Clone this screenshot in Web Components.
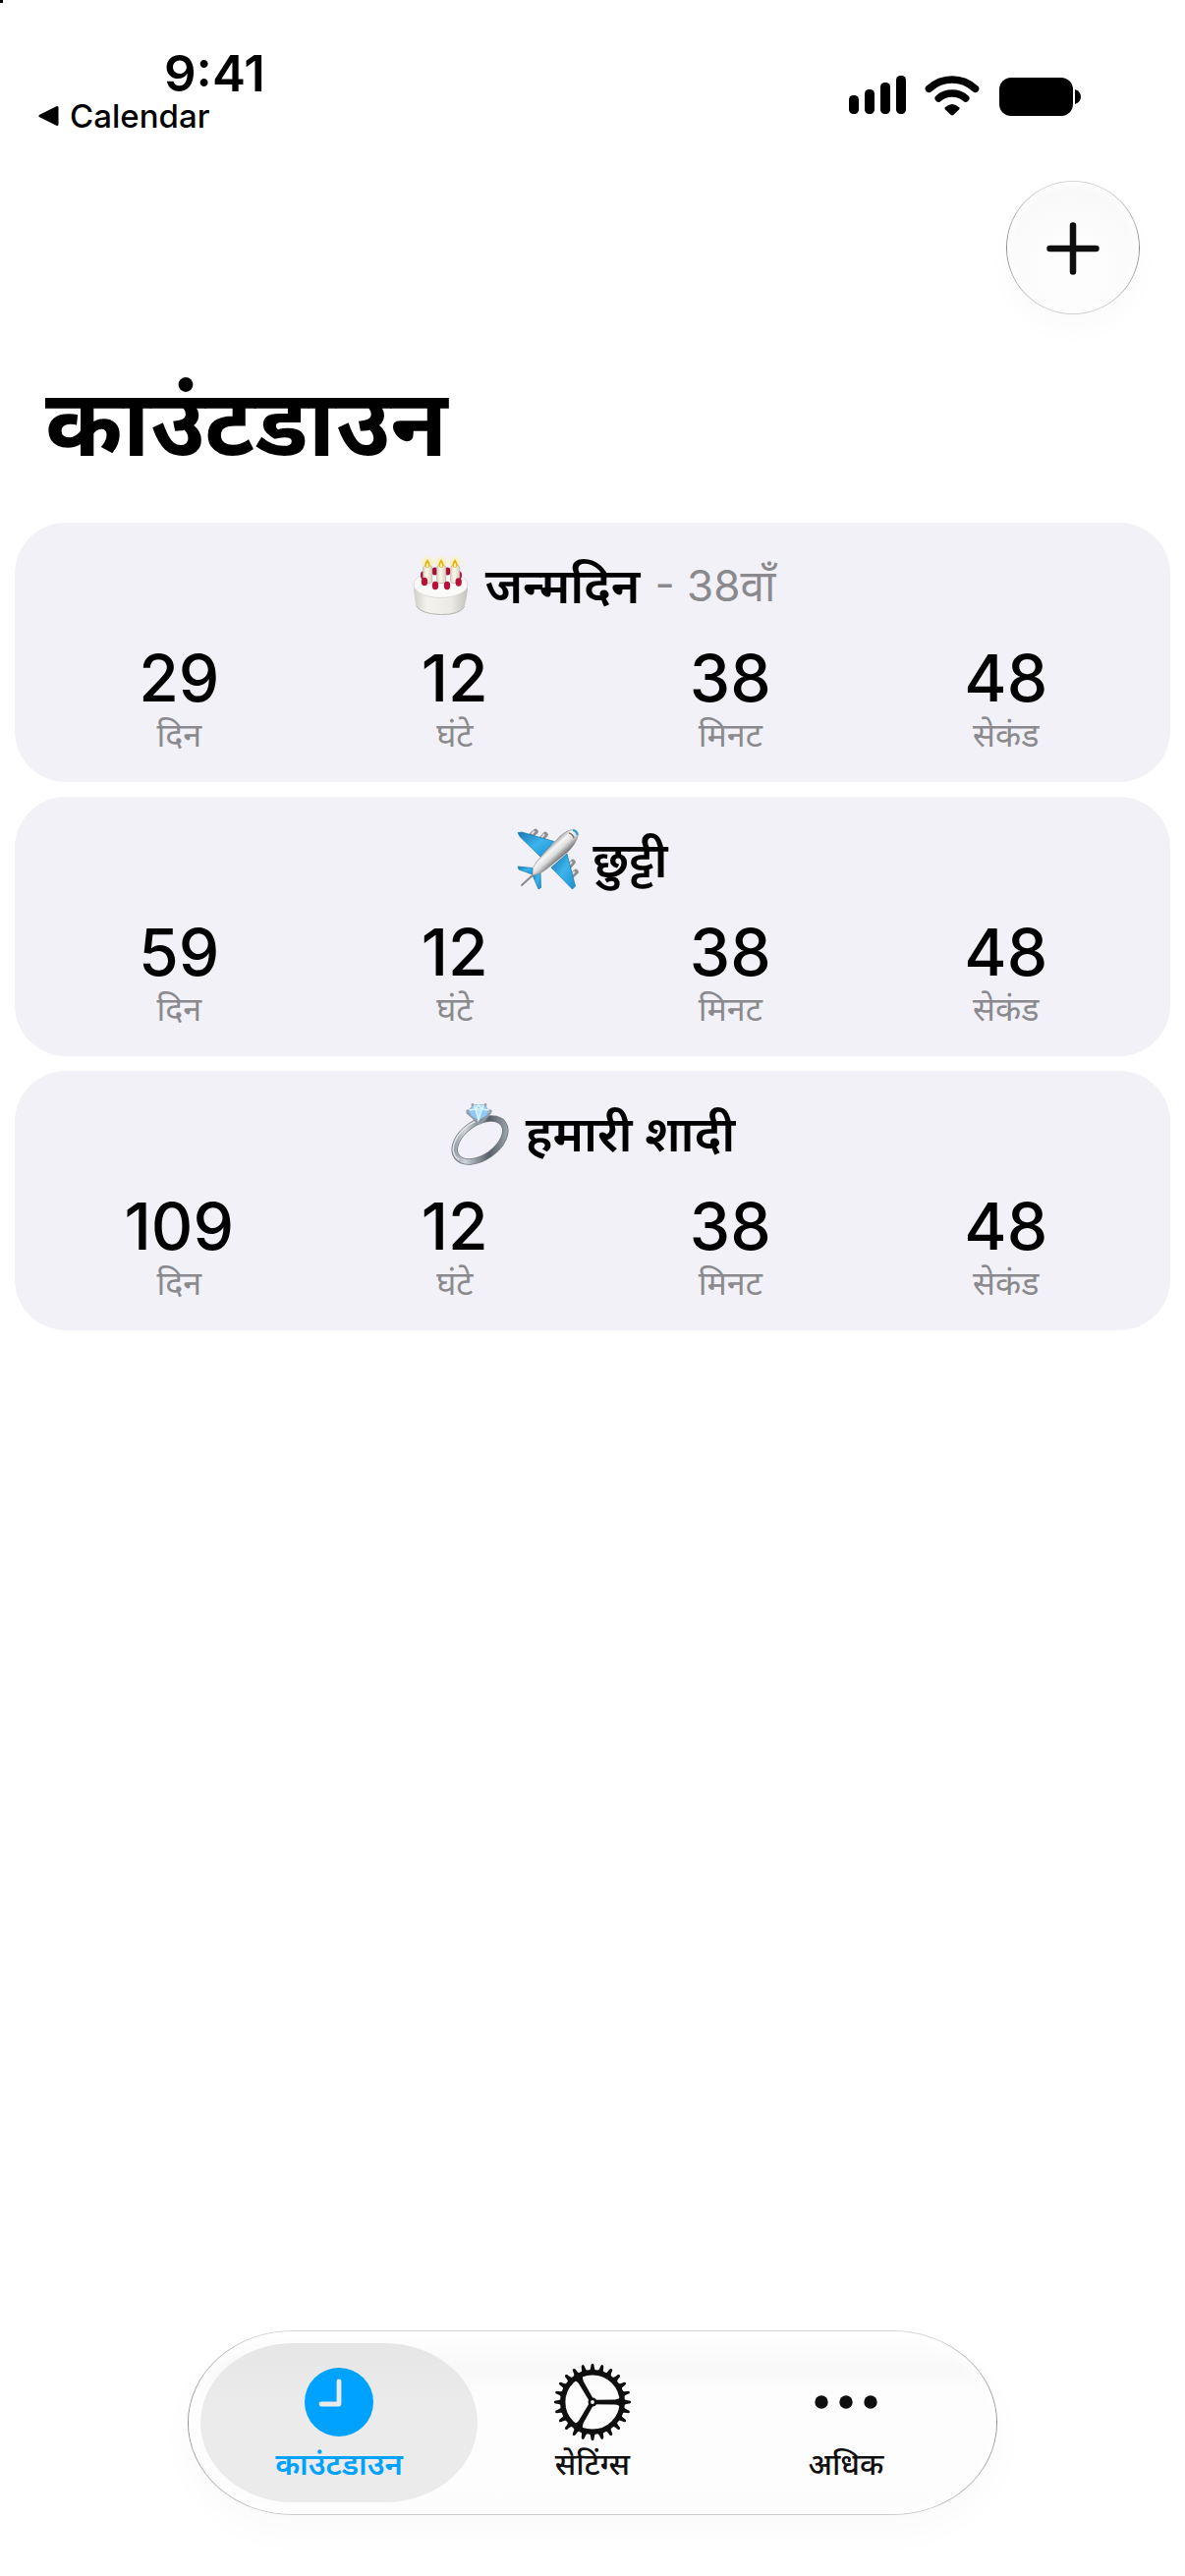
<!DOCTYPE html>
<html lang="hi">
<head>
<meta charset="utf-8">
<meta name="viewport" content="width=device-width, initial-scale=1">
<title>काउंटडाउन</title>
<style>
  html, body { margin: 0; background: #fff; }
  body {
    font-family: Inter, "Noto Sans Devanagari", "Noto Sans", sans-serif;
    color: #000;
  }
</style>
</head>
<body>
<countdown-app>
  <status-bar slot="status" time="9:41" back="Calendar"></status-bar>
  <glass-button slot="action" label="जोड़ें"></glass-button>
  <span slot="title">काउंटडाउन</span>

  <countdown-card days="29" hours="12" minutes="38" seconds="48">
    <emoji-icon slot="icon" name="cake"></emoji-icon>जन्मदिन<span slot="note">- 38वाँ</span>
  </countdown-card>
  <countdown-card days="59" hours="12" minutes="38" seconds="48">
    <emoji-icon slot="icon" name="plane"></emoji-icon>छुट्टी
  </countdown-card>
  <countdown-card days="109" hours="12" minutes="38" seconds="48">
    <emoji-icon slot="icon" name="ring"></emoji-icon>हमारी शादी
  </countdown-card>

  <tab-bar slot="tabs">
    <tab-item icon="clock" active>काउंटडाउन</tab-item>
    <tab-item icon="gear">सेटिंग्स</tab-item>
    <tab-item icon="more">अधिक</tab-item>
  </tab-bar>
</countdown-app>

<script>
class BaseElement extends HTMLElement {
  connectedCallback() {
    if (!this.shadowRoot) {
      this.attachShadow({ mode: "open" }).innerHTML = this.render();
    }
  }
}

/* Page frame: status, toolbar, heading, scrolling list, tab bar */
customElements.define("countdown-app", class extends BaseElement {
  render() {
    return `
      <style>
        :host { display: flex; flex-direction: column; min-height: 100vh; box-sizing: border-box; padding-bottom: 62px; position: relative; }
        .corner { position: absolute; left: 0; top: 0; width: 3px; height: 3px; background: #000; }
        .toolbar { display: flex; justify-content: flex-end; padding: 0 46px; }
        h1 { margin: 40px 46px 0; font-size: 95px; line-height: 140px; font-weight: 700; }
        main { display: flex; flex-direction: column; gap: 15px; padding: 0 15px; margin-top: 32px; flex: 1; }
        footer { display: flex; justify-content: center; }
      </style>
      <div class="corner"></div>
      <slot name="status"></slot>
      <div class="toolbar"><slot name="action"></slot></div>
      <h1><slot name="title"></slot></h1>
      <main><slot></slot></main>
      <footer><slot name="tabs"></slot></footer>`;
  }
});

customElements.define("status-bar", class extends BaseElement {
  render() {
    return `
      <style>
        :host { display: flex; justify-content: space-between; align-items: flex-start; height: 184px; box-sizing: border-box; padding: 47px 106px 0 39px; }
        .left { display: flex; flex-direction: column; align-items: flex-start; }
        time { font-size: 51px; line-height: 56px; font-weight: 600; padding-left: 128px; }
        a { display: flex; align-items: center; gap: 10px; color: inherit; text-decoration: none; font-size: 33px; line-height: 30px; font-weight: 500; }
        .right { display: flex; align-items: center; gap: 19px; padding-top: 30px; }
        svg { display: block; }
      </style>
      <div class="left">
        <time>${this.getAttribute("time")}</time>
        <a href="#"><svg width="22" height="22" viewBox="0 0 22 22"><path d="M2 11 19 2.500V19.500Z" stroke="#000" stroke-width="3" stroke-linejoin="round"/></svg><span>${this.getAttribute("back")}</span></a>
      </div>
      <div class="right">
        <svg width="58" height="41" viewBox="0 0 58 41" role="img" aria-label="signal"><rect y="20" width="10" height="19" rx="4.500"/><rect x="16" y="14" width="10" height="25" rx="4.500"/><rect x="32" y="7" width="10" height="32" rx="4.500"/><rect x="48" width="10" height="39" rx="4.500"/></svg>
        <svg width="56" height="41" viewBox="0 0 56 41" role="img" aria-label="wifi"><g fill="none" stroke="#000" stroke-width="7.600" stroke-linecap="round"><path d="M4.500 13.300Q14.500 4 28 4T51.500 13.300"/><path d="M14.300 23Q20 18 28 18T41.700 23"/></g><path d="M20.500 32.500Q28 25.500 35.500 32.500Q36 34 34.500 35L29.500 39.800Q28 41 26.500 39.800L21.500 35Q20 34 20.500 32.500Z"/></svg>
        <svg width="84" height="41" viewBox="0 0 84 41" role="img" aria-label="battery"><rect x="1" y="2" width="75" height="39" rx="12"/><path d="M78 14Q84 16 84 21.500T78 29Z"/></svg>
      </div>`;
  }
});

customElements.define("glass-button", class extends BaseElement {
  render() {
    return `
      <style>
        :host { display: block; }
        button {
          display: grid; place-items: center; width: 136px; height: 136px; padding: 2px 0 0; box-sizing: border-box;
          border: 1px solid transparent; border-radius: 50%;
          background: radial-gradient(circle at 50% 68%, #fdfdfd 30%, #f8f8f8 75%) padding-box,
                      linear-gradient(#d6d6d6, #8c8c8c 50%, #cecece) border-box;
          box-shadow: inset 0 0 10px 3px #fff, 0 16px 28px rgba(0,0,0,.02);
        }
      </style>
      <button type="button" aria-label="${this.getAttribute("label")}">
        <svg width="56" height="56" viewBox="0 0 56 56"><path d="M28 4.500v47M4.500 28h47" stroke="#0f0f0f" stroke-width="6.500" stroke-linecap="round"/></svg>
      </button>`;
  }
});

customElements.define("countdown-card", class extends BaseElement {
  render() {
    const units = [["days", "दिन"], ["hours", "घंटे"], ["minutes", "मिनट"], ["seconds", "सेकंड"]];
    return `
      <style>
        :host { display: block; box-sizing: border-box; height: 264px; padding: 29px 27px 0; border-radius: 52px; background: #f2f1f7; }
        h2 { display: flex; justify-content: center; align-items: center; gap: 15px; margin: 0; font-size: 50px; line-height: 70px; font-weight: 600; }
        .note { color: #8a8a8e; font-weight: 400; font-size: 44px; }
        .note:not(.used) { display: none; }
        dl { display: grid; grid-template-columns: repeat(4, 1fr); margin: 20px 0 0; text-align: center; }
        dl div { display: flex; flex-direction: column-reverse; }
        dd { margin: 0; font-size: 66px; line-height: 78px; font-weight: 500; }
        dt { font-size: 34px; line-height: 38px; color: #8a8a8e; }
      </style>
      <h2><slot name="icon"></slot><span><slot></slot></span><span class="note ${this.querySelector("[slot=note]") ? "used" : ""}"><slot name="note"></slot></span></h2>
      <dl>${units.map(([key, label]) => `<div><dt>${label}</dt><dd>${this.getAttribute(key)}</dd></div>`).join("")}</dl>`;
  }
});

const EMOJI = {
  cake: `
    <defs>
      <linearGradient id="side" x1="0" x2="1"><stop stop-color="#cfcec8"/><stop offset=".25" stop-color="#f4f3ef"/><stop offset=".7" stop-color="#eceae5"/><stop offset="1" stop-color="#c3c1bb"/></linearGradient>
      <linearGradient id="wax" x1="0" x2="1"><stop stop-color="#dcd7c6"/><stop offset=".4" stop-color="#fbf8ec"/><stop offset="1" stop-color="#d8d2bf"/></linearGradient>
      <radialGradient id="glow"><stop stop-color="#fff0a0"/><stop offset="1" stop-color="#fff0a0" stop-opacity="0"/></radialGradient>
    </defs>
    <path d="M4 30V35Q5 43 6 51Q9 61 31.500 61T56 51Q58 43 59 35V30Z" fill="url(#side)"/>
    <path d="M7 52Q12 60 31.500 60.500T56 52" fill="none" stroke="#b9b7b1"/>
    <ellipse cx="31.500" cy="30" rx="27.500" ry="13.500" fill="#fafaf8" stroke="#dddcd8"/>
    <g fill="#a90f34"><ellipse cx="25.500" cy="16.500" rx="3" ry="4"/><ellipse cx="38.500" cy="16.500" rx="3" ry="4"/><ellipse cx="13.500" cy="20.500" rx="2.500" ry="4"/><ellipse cx="50.500" cy="20.500" rx="2.500" ry="4"/></g>
    <g id="candle"><circle cx="18" cy="7.500" r="8" fill="url(#glow)"/><rect x="13.700" y="10.500" width="9" height="18" rx="2.500" fill="url(#wax)" stroke="#bdb8a6" stroke-width=".8"/><path d="M18 4Q23.500 12 18 13Q12.500 12 18 4Z" fill="#e6b117"/><path d="M18 7.500Q20.500 12 18 12.300Q15.500 12 18 7.500Z" fill="#fff1a0"/></g>
    <use href="#candle" x="14"/><use href="#candle" x="28"/>
    <g fill="#b9103a"><ellipse cx="15" cy="27" rx="3.200" ry="4.200"/><ellipse cx="26" cy="31" rx="3.200" ry="4.200"/><ellipse cx="38" cy="31" rx="3.200" ry="4.200"/><ellipse cx="49.700" cy="27.500" rx="3.200" ry="4.200"/></g>`,
  plane: `
    <defs>
      <linearGradient id="body" gradientUnits="userSpaceOnUse" x1="32" y1="16" x2="44" y2="29"><stop stop-color="#8b8b8b"/><stop offset=".35" stop-color="#f6f6f6"/><stop offset=".65" stop-color="#dcdcdc"/><stop offset="1" stop-color="#7c7c7c"/></linearGradient>
      <linearGradient id="wing" x1="0" y1="0" x2="1" y2="1"><stop stop-color="#1478b4"/><stop offset=".5" stop-color="#3db4ec"/><stop offset="1" stop-color="#1b8fd0"/></linearGradient>
    </defs>
    <g stroke="#8f8f8f" stroke-width="5.500" stroke-linecap="round"><path d="M15 6 19 2.500M25 10 29 5.500M53 38 57 33.500M55 48 60 43.500"/></g>
    <g stroke="#dedede" stroke-width="2"><path d="M15 5 18 2M25 9 28 5M53 37 56 33M56 46 59 43"/></g>
    <g fill="url(#wing)" stroke="#1878b0" stroke-width=".7" stroke-linejoin="round"><path d="M1 3.500 5 3 38 12.500 24 28 3 7.500Z"/><path d="M51 25 59.500 58 56.500 61 35 39Z"/><path d="M1 38 16 39.500 16 46 2 41Z"/><path d="M16 47 24 43 24.500 59.500 22 61Z"/></g>
    <path d="M17 46 5 57" stroke="#8a8a8a" stroke-width="2" stroke-linecap="round"/>
    <path d="M16 47Q15 39 20 33L44 7Q52 0 58 .5Q64 2 61.500 9Q59 16 52 23L31 40Q24 46 16 47Z" fill="url(#body)" stroke="#8e8e8e" stroke-width=".6"/>
    <path d="M57 1Q61.500 2 61.500 6" stroke="#2a9bd8" stroke-width="2" fill="none"/><path d="M53 4Q57 5 58 9" stroke="#777" stroke-width="1.500" fill="none"/>`,
  ring: `
    <defs>
      <linearGradient id="metal" gradientUnits="userSpaceOnUse" x1="5" y1="20" x2="56" y2="56"><stop stop-color="#7f878e"/><stop offset=".25" stop-color="#cfd5da"/><stop offset=".45" stop-color="#8d959c"/><stop offset=".65" stop-color="#565f68"/><stop offset="1" stop-color="#a9b0b6"/></linearGradient>
    </defs>
    <g fill="none" transform="rotate(-35 30.500 37.500)"><ellipse cx="30.500" cy="37.500" rx="29" ry="17.500" stroke="#70787f" stroke-width="6.500"/><ellipse cx="30.500" cy="37.500" rx="29" ry="17.500" stroke="url(#metal)" stroke-width="5"/><ellipse cx="30" cy="36.500" rx="29.500" ry="18" stroke="#dde2e7" stroke-width="1.500" stroke-dasharray="55 200" stroke-dashoffset="-70"/></g>
    <path d="M17 9 24 15 28 20H31L36 15 41.500 9" fill="none" stroke="#929aa1" stroke-width="2.500" stroke-linejoin="round"/>
    <path d="M19.500 7 23.500 1.500H35L39 7 38 12 29 17.500 21 12.500Z" fill="#8ecbfa" stroke="#7fa6c6" stroke-width=".8"/>
    <path d="M23.500 1.500 26 6 29 2 32.500 6 35 1.500M19.500 7 26 6H32.500L39 7M26 6 29 17 32.500 6" stroke="#e1f5ff" stroke-width="1.300" fill="#b9e5ff"/>
    <g fill="#9aa1a7"><circle cx="23" cy="1.500" r="1.500"/><circle cx="36" cy="1.500" r="1.500"/><circle cx="18" cy="8" r="1.800"/><circle cx="41" cy="8" r="1.800"/></g>`
};

customElements.define("emoji-icon", class extends BaseElement {
  render() {
    const name = this.getAttribute("name");
    return `
      <style>:host { display: block; width: 62px; height: 62px; } svg { display: block; overflow: visible; }</style>
      <svg width="62" height="62" viewBox="0 0 62 62" role="img" aria-label="${name}">${EMOJI[name]}</svg>`;
  }
});

customElements.define("tab-bar", class extends BaseElement {
  render() {
    return `
      <style>
        :host { display: block; }
        nav {
          display: flex; padding: 12px 24px; border: 1px solid transparent; border-radius: 108px / 95px;
          background: linear-gradient(#fff 2px, #f8f8f8 38px, #fdfdfd 64px, #fdfdfd 85%, #fcfcfc) padding-box,
                      linear-gradient(#d6d6d6, #8c8c8c 50%, #cacaca) border-box;
          box-shadow: inset 0 0 12px 3px #fff, 0 16px 40px rgba(0,0,0,.025);
        }
      </style>
      <nav><slot></slot></nav>`;
  }
});

const teeth = Array.from({ length: 24 }, (_, i) =>
  `<path d="M-3.800 -31Q-1.800 -33 -1.500 -38Q0 -40.500 1.500 -38Q1.800 -33 3.800 -31Z" transform="rotate(${i * 15})"/>`).join("");
const spokes = [90, 210, 330].map(a =>
  `<path d="M-2.300 -1 -2.600 -23Q-2.800 -27 -6 -29H6Q2.800 -27 2.600 -23L2.300 -1Z" transform="rotate(${a})"/>`).join("");

const TAB_ICONS = {
  clock: `<circle r="35" fill="currentColor"/><path d="M0 -21V2H-18" fill="none" stroke="#e8eaec" stroke-width="4.800" stroke-linecap="round" stroke-linejoin="round"/>`,
  gear: `<g fill="currentColor">${teeth}${spokes}<circle r="4.500"/></g><circle r="30.300" fill="none" stroke="currentColor" stroke-width="5.400"/><circle r="1.900" fill="#fdfdfd"/>`,
  more: `<g fill="currentColor"><circle cx="-25" r="6.700"/><circle r="6.700"/><circle cx="25" r="6.700"/></g>`
};

customElements.define("tab-item", class extends BaseElement {
  render() {
    return `
      <style>
        :host { display: block; margin: 0 -12px; color: #0f0f0f; }
        :host([active]) { color: #00a2ff; }
        button {
          display: flex; flex-direction: column; align-items: center; gap: 4px; width: 282px; height: 162px; box-sizing: border-box;
          padding: 19px 0 0; border: 0; border-radius: 94px / 81px; background: none; color: inherit; font: inherit;
          font-size: 31px; line-height: 36px; font-weight: 500;
        }
        :host([active]) button { background: linear-gradient(#e6e6e6, #ebebeb 40%); font-weight: 600; }
        svg { display: block; }
      </style>
      <button type="button"><svg width="82" height="82" viewBox="-41 -41 82 82" aria-hidden="true">${TAB_ICONS[this.getAttribute("icon")]}</svg><span><slot></slot></span></button>`;
  }
});
</script>
</body>
</html>
